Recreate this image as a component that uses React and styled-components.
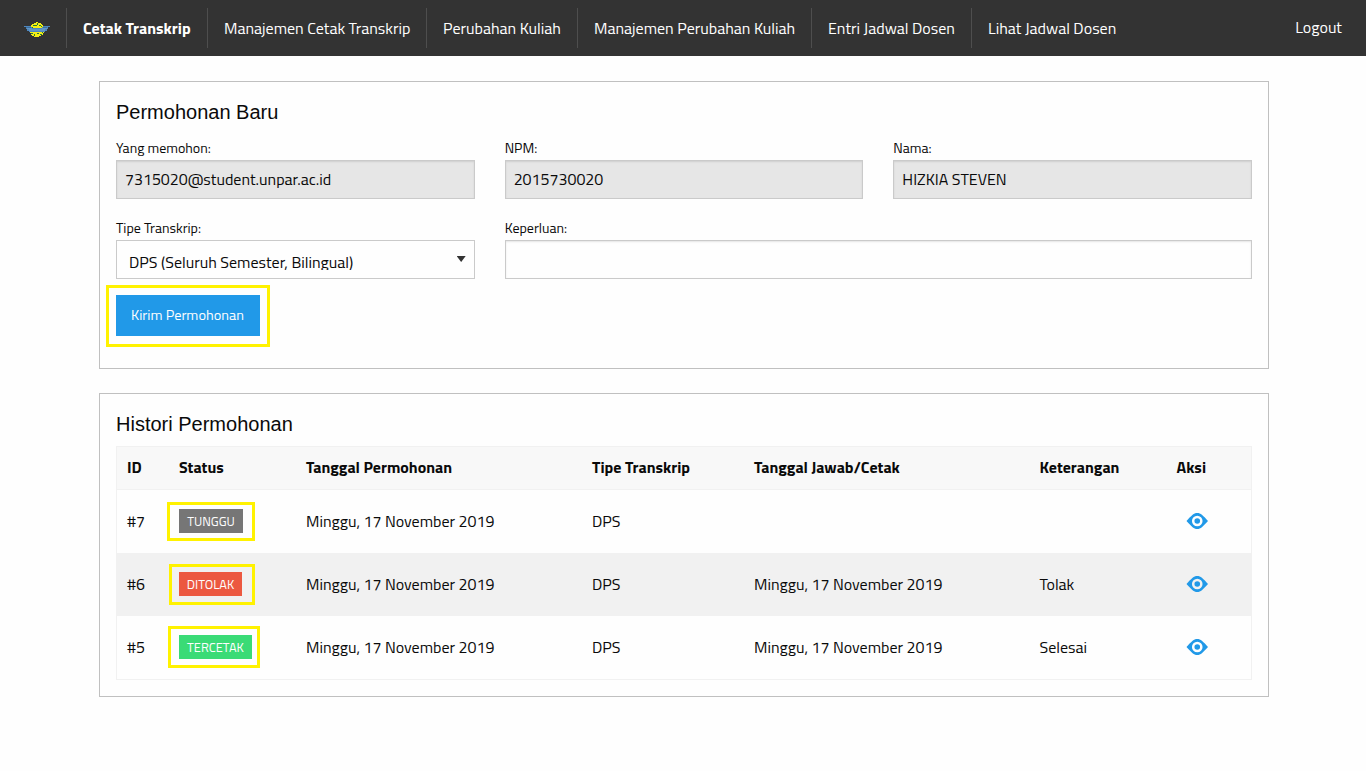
import React from "react";
import styled, { createGlobalStyle } from "styled-components";

const GlobalStyle = createGlobalStyle`
  *, *::before, *::after { box-sizing: border-box; }
  body {
    margin: 0;
    background: #fefefe;
    color: #0a0a0a;
    font-family: "Titillium Web", Roboto, sans-serif;
    font-size: 16px;
    line-height: 24px;
  }
`;

const Text = styled.span`
  white-space: nowrap;
`;

/* Navigation */
const TopBar = styled.nav`
  display: flex;
  align-items: center;
  height: 56px;
  padding: 0 24px 0 0;
  background: #333;
  color: #fff;
`;

const Brand = styled.div`
  display: flex;
  align-items: center;
  width: 66px;
  height: 40px;
  padding: 4px 0 0 24px;
`;

const NavItem = styled.a`
  display: flex;
  align-items: center;
  width: ${(p) => p.$width}px;
  height: 40px;
  padding: 0 0 0 16px;
  border-left: 1px solid #4e4e4e;
  font-weight: ${(p) => (p.$active ? 700 : 400)};
`;

const Logout = styled.a`
  margin: -2px 0 0 auto;
`;

/* Panels */
const Main = styled.main`
  display: flex;
  flex-direction: column;
  gap: 24px;
  width: 1170px;
  margin: 25px 0 0 99px;
`;

const Panel = styled.section`
  height: ${(p) => p.$height}px;
  padding: 16px;
  border: 1px solid #c0c0c0;
`;

const Title = styled.h5`
  margin: 0;
  height: 28px;
  font: 400 20px/28px "Liberation Sans", Arial, sans-serif;
`;

/* Form */
const FormGrid = styled.div`
  display: grid;
  grid-template-columns: repeat(3, 1fr);
  column-gap: 30px;
  row-gap: 16px;
  margin-top: 9px;
`;

const Field = styled.label`
  display: flex;
  flex-direction: column;
  min-width: 0;
  grid-column: span ${(p) => p.$span || 1};
`;

const FieldLabel = styled.div`
  height: 25px;
  font-size: 14px;
  line-height: 25px;
`;

const InputBox = styled.div`
  display: flex;
  align-items: center;
  height: 39px;
  padding: 0 8px 1px;
  border: 1px solid #cacaca;
  background: ${(p) => (p.$disabled ? "#e6e6e6" : "#fefefe")};
  box-shadow: inset 0 1px 2px rgba(10, 10, 10, 0.1);
`;

const SelectBox = styled.div`
  display: flex;
  justify-content: space-between;
  height: 39px;
  padding: 8px 8px 8px 12px;
  border: 1px solid #cacaca;
  background: #fefefe;
`;

const SelectValue = styled.div`
  height: 21px;
  overflow: hidden;
  line-height: 27px;
`;

const Caret = styled.div`
  width: 9px;
  height: 6px;
  margin-top: 7px;
  background: #333;
  clip-path: polygon(0 0, 100% 0, 50% 100%);
`;

/* Highlighted controls */
const Anchor = styled.div`
  position: relative;
  width: max-content;
`;

const Highlight = styled.div`
  position: absolute;
  top: -${(p) => p.$top}px;
  left: -${(p) => p.$left}px;
  width: ${(p) => p.$width}px;
  height: ${(p) => p.$height}px;
  border: 3px solid #fff200;
  pointer-events: none;
`;

const ButtonRow = styled.div`
  margin-top: 16px;
`;

const SubmitButton = styled.button`
  display: block;
  width: 144px;
  height: 41px;
  padding: 0 1px 1px 0;
  border: 0;
  background: #2199e8;
  color: #fefefe;
  font: inherit;
  font-size: 14.4px;
`;

/* History table */
const Table = styled.table`
  width: 1136px;
  margin-top: 8px;
  border: 1px solid #f1f1f1;
  border-collapse: separate;
  border-spacing: 0;
  table-layout: fixed;
`;

const Col = styled.col`
  width: ${(p) => p.$width}px;
`;

const HeadCell = styled.th`
  height: 43px;
  padding: 0 0 2px ${(p) => p.$inset || 10}px;
  background: #f8f8f8;
  border-bottom: 1px solid #f1f1f1;
  text-align: left;
  font-weight: 700;
`;

const BodyRow = styled.tr`
  background: ${(p) => (p.$striped ? "#f1f1f1" : "#fefefe")};
`;

const Cell = styled.td`
  height: 63px;
  padding: ${(p) => (p.$icon ? "0 0 2px 19px" : `0 0 1px ${p.$inset || 10}px`)};
  vertical-align: middle;
`;

const Badge = styled.div`
  display: flex;
  align-items: center;
  justify-content: center;
  width: ${(p) => p.$width}px;
  height: 24px;
  background: ${(p) => p.$color};
  color: #fefefe;
  font-size: 12.8px;
`;

const EyeSvg = styled.svg`
  display: block;
  width: 22px;
  height: 16px;
`;

const Eye = () => (
  <EyeSvg viewBox="0 0 22 16" fill="#2199e8" fillRule="evenodd">
    <path d="M.5 8C2.7 5.5 4.500 3.600 6.600 1.800C8 .6 9.500 0 11.250 0s3.250.6 4.650 1.800C18 3.600 19.800 5.500 22 8c-2.200 2.500-4 4.400-6.100 6.200C14.500 15.400 13 16 11.250 16s-3.250-.6-4.650-1.800C4.500 12.400 2.700 10.500.5 8ZM11.250 2.700a5.300 5.300 0 1 0 0 10.600a5.300 5.300 0 1 0 0-10.600ZM11.250 5.200a2.800 2.800 0 1 1 0 5.600a2.800 2.800 0 1 1 0-5.600Z" />
  </EyeSvg>
);

const Logo = () => (
  <svg width="26" height="16" viewBox="0 0 26 16" shapeRendering="crispEdges">
    <path fill="#f5ee14" d="M10 1h2V0h2v1h3v1h1v1h1v2h1v6h-1v2h-2v1h-2v1h-5v-1H8v-1H7v-2H6V5h1V3h1V2h2Z" />
    <path fill="#26783a" d="M9 3h2v1H9zM13 1h1v2h-1zM15 3h2v1h-2zM8 5h1v1H8zM11 3h2v1h-2zM17 4h1v1h-1zM7 11h2v1H7zM10 12h1v2h-1zM13 11h2v1h-2zM16 12h2v1h-2zM18 10h1v1h-1z" />
    <path fill="#4d86bd" d="M0 4h7v1h1v1h10V5h1V4h7v1h-2v2h-1v2h-2v1H5V9H3V7H2V5H0Z" />
    <path fill="#6296c5" d="M3 6h5v1h10V6h5v1h-2v2H5V7H3Z" />
    <path fill="#3c6f9f" d="M2 5h5v1H2zM19 5h4v1h-4z" />
  </svg>
);

const NAV = [
  { label: "Cetak Transkrip", width: 141, active: true },
  { label: "Manajemen Cetak Transkrip", width: 219 },
  { label: "Perubahan Kuliah", width: 151 },
  { label: "Manajemen Perubahan Kuliah", width: 234 },
  { label: "Entri Jadwal Dosen", width: 160 },
  { label: "Lihat Jadwal Dosen", width: 160 },
];

const COLUMNS = [
  { label: "ID", width: 52 },
  { label: "Status", width: 127 },
  { label: "Tanggal Permohonan", width: 286 },
  { label: "Tipe Transkrip", width: 162 },
  { label: "Tanggal Jawab/Cetak", width: 286 },
  { label: "Keterangan", width: 137, inset: 9.5 },
  { label: "Aksi", width: 84, inset: 9.5 },
];

const DATE = "Minggu, 17 November 2019";

const ROWS = [
  {
    id: "#7", status: "TUNGGU", color: "#767676", width: 64,
    mark: { $top: 7, $left: 12, $width: 88, $height: 39 },
    answered: "", note: "",
  },
  {
    id: "#6", status: "DITOLAK", color: "#ec5840", width: 63,
    mark: { $top: 8, $left: 10, $width: 86, $height: 41 },
    answered: DATE, note: "Tolak",
  },
  {
    id: "#5", status: "TERCETAK", color: "#3adb76", width: 73,
    mark: { $top: 9, $left: 11, $width: 92, $height: 42 },
    answered: DATE, note: "Selesai",
  },
];

function RequestForm() {
  return (
    <Panel $height={288}>
      <Title>Permohonan Baru</Title>
      <FormGrid>
        <Field>
          <FieldLabel>Yang memohon:</FieldLabel>
          <InputBox $disabled>7315020@student.unpar.ac.id</InputBox>
        </Field>
        <Field>
          <FieldLabel>NPM:</FieldLabel>
          <InputBox $disabled>2015730020</InputBox>
        </Field>
        <Field>
          <FieldLabel>Nama:</FieldLabel>
          <InputBox $disabled>HIZKIA STEVEN</InputBox>
        </Field>
        <Field>
          <FieldLabel>Tipe Transkrip:</FieldLabel>
          <SelectBox>
            <SelectValue>DPS (Seluruh Semester, Bilingual)</SelectValue>
            <Caret />
          </SelectBox>
        </Field>
        <Field $span={2}>
          <FieldLabel>Keperluan:</FieldLabel>
          <InputBox />
        </Field>
      </FormGrid>
      <ButtonRow>
        <Anchor>
          <SubmitButton type="button">Kirim Permohonan</SubmitButton>
          <Highlight $top={10} $left={10} $width={164} $height={62} />
        </Anchor>
      </ButtonRow>
    </Panel>
  );
}

function History() {
  return (
    <Panel $height={304}>
      <Title>Histori Permohonan</Title>
      <Table>
        <colgroup>
          {COLUMNS.map((c) => <Col key={c.label} $width={c.width} />)}
        </colgroup>
        <thead>
          <tr>
            {COLUMNS.map((c) => (
              <HeadCell key={c.label} $inset={c.inset}><Text>{c.label}</Text></HeadCell>
            ))}
          </tr>
        </thead>
        <tbody>
          {ROWS.map((r, i) => (
            <BodyRow key={r.id} $striped={i % 2 === 1}>
              <Cell>{r.id}</Cell>
              <Cell>
                <Anchor>
                  <Badge $width={r.width} $color={r.color}>{r.status}</Badge>
                  <Highlight {...r.mark} />
                </Anchor>
              </Cell>
              <Cell>{DATE}</Cell>
              <Cell>DPS</Cell>
              <Cell>{r.answered}</Cell>
              <Cell $inset={9.5}>{r.note}</Cell>
              <Cell $icon><Eye /></Cell>
            </BodyRow>
          ))}
        </tbody>
      </Table>
    </Panel>
  );
}

export default function App() {
  return (
    <>
      <GlobalStyle />
      <TopBar>
        <Brand><Logo /></Brand>
        {NAV.map((n) => (
          <NavItem key={n.label} $width={n.width} $active={n.active}>
            <Text>{n.label}</Text>
          </NavItem>
        ))}
        <Logout>Logout</Logout>
      </TopBar>
      <Main>
        <RequestForm />
        <History />
      </Main>
    </>
  );
}
